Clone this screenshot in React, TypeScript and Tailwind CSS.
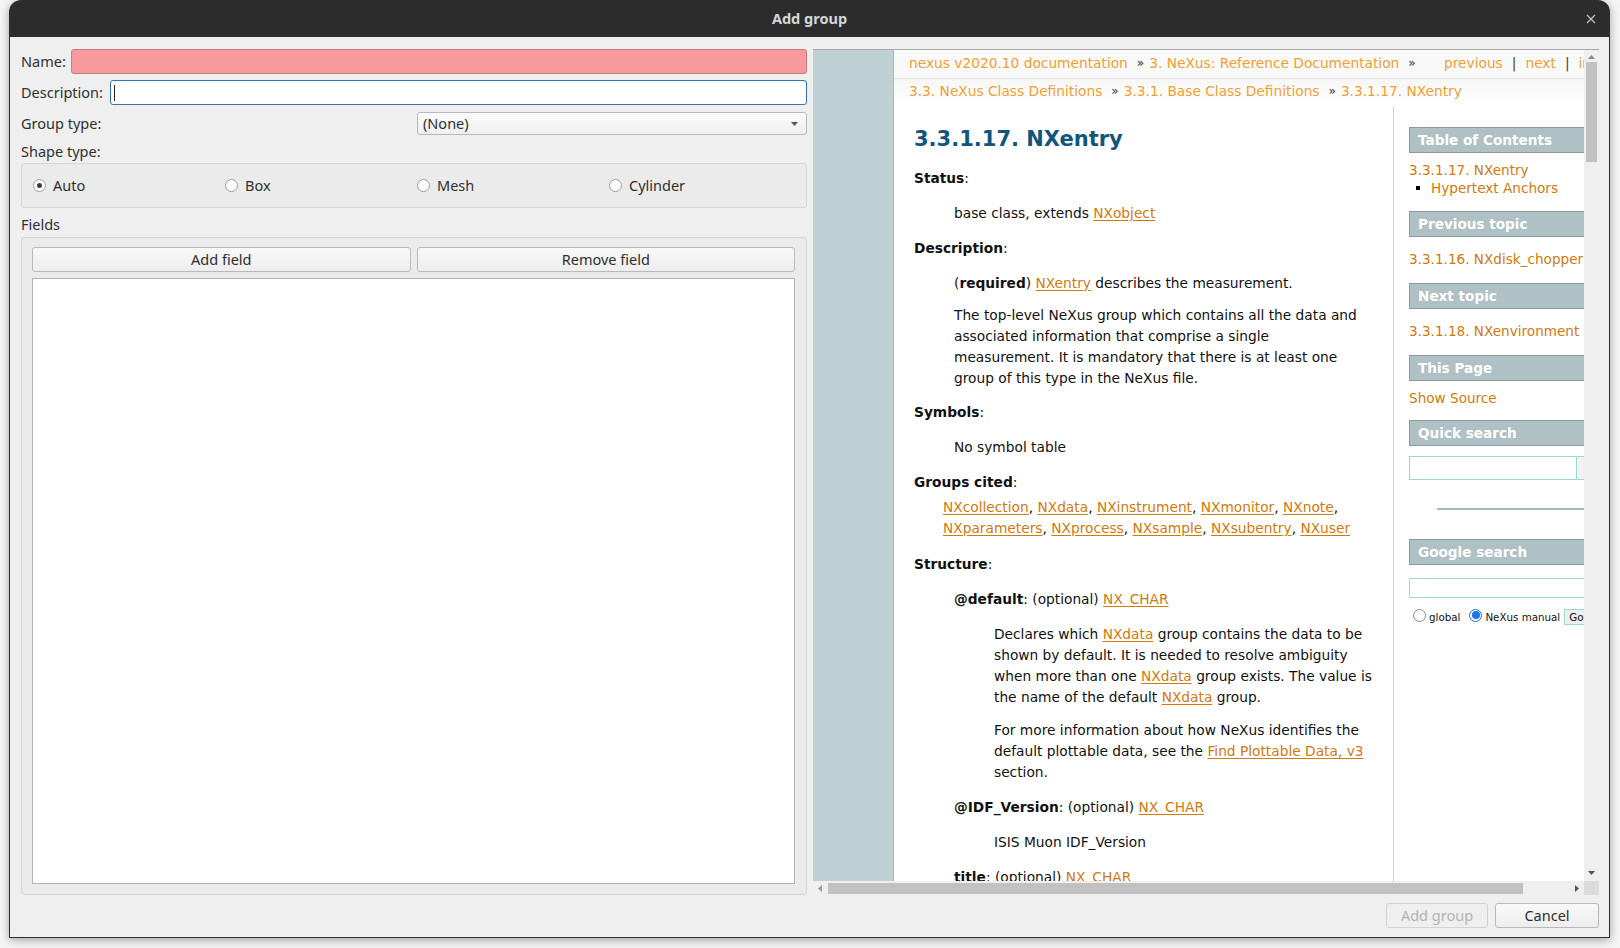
import React from 'react';

const A = ({ children }: { children: React.ReactNode }) => (
  <span className="text-[#cf7a0c] underline underline-offset-[2px]">{children}</span>
);

const Radio = ({ checked, label }: { checked?: boolean; label: string }) => (
  <div className="flex items-center gap-[7px]">
    <span className="flex h-[13px] w-[13px] items-center justify-center rounded-full border border-[#9c9c9c] bg-white">
      {checked && <span className="h-[5px] w-[5px] rounded-full bg-[#3c3c3c]" />}
    </span>
    <span>{label}</span>
  </div>
);

const QtButton = ({ children, disabled, className = '' }: { children: React.ReactNode; disabled?: boolean; className?: string }) => (
  <div
    className={`flex h-[25px] items-center justify-center rounded-[3px] border ${
      disabled
        ? 'border-[#d2d2d2] bg-[#efefef] text-[#b3b3b3]'
        : 'border-[#b9b9b9] bg-gradient-to-b from-[#f9f9f9] to-[#ededed] text-[#2e2e2e]'
    } ${className}`}
  >
    {children}
  </div>
);

const SideHead = ({ children, className = '' }: { children: React.ReactNode; className?: string }) => (
  <div className={`flex h-[26px] items-center border border-[#889b9f] bg-[#afc1c4] pl-[8px] font-bold text-white ${className}`}>
    {children}
  </div>
);

const Sep = () => <span className="ml-[9px] mr-[5px] text-[12px] text-[#333]">»</span>;

export default function App() {
  return (
    <div className="h-[948px] w-[1620px] overflow-hidden bg-[#f5f5f5] pl-[9px] font-['Noto_Sans','Open_Sans',sans-serif] text-[14.5px] text-[#2f2f2f]">
      <div className="flex h-[938px] w-[1601px] flex-col rounded-t-[12px] shadow-[0_2px_10px_rgba(0,0,0,0.35)]">
        {/* Title bar */}
        <div className="relative flex h-[37px] items-center justify-center rounded-t-[12px] bg-[#2c2c2c]">
          <span className="font-bold text-[#d6d6d6]">Add group</span>
          <svg className="absolute right-[14px] top-[14px]" width="10" height="10" viewBox="0 0 10 10">
            <path d="M1 1 L9 9 M9 1 L1 9" stroke="#c4c4c4" strokeWidth="1.2" />
          </svg>
        </div>

        {/* Body */}
        <div className="flex flex-1 flex-col border-x border-b border-[#2d2d2d] bg-[#efefef] pb-[9px] pl-[11px] pr-[10px] pt-[12px]">
          <div className="flex h-[846px] gap-[6px]">
            {/* Left pane */}
            <div className="flex w-[786px] flex-col">
              <div className="flex h-[25px] items-center">
                <span className="w-[50px]">Name:</span>
                <div className="h-[25px] flex-1 rounded-[3px] border border-[#c97a7e] bg-[#f7999d]" />
              </div>
              <div className="mt-[6px] flex h-[25px] items-center">
                <span className="w-[89px]">Description:</span>
                <div className="flex h-[25px] flex-1 items-center rounded-[3px] border border-[#2f74b5] bg-white pl-[3px]">
                  <span className="h-[16px] w-[1px] bg-[#222]" />
                </div>
              </div>
              <div className="mt-[7px] flex h-[23px] items-center">
                <span className="w-[396px]">Group type:</span>
                <div className="flex h-[23px] flex-1 items-center justify-between rounded-[3px] border border-[#b8b8b8] bg-gradient-to-b from-[#fbfbfb] to-[#efefef] pl-[5px] pr-[8px]">
                  <span>(None)</span>
                  <svg width="7" height="4" viewBox="0 0 7 4">
                    <path d="M0 0 L7 0 L3.5 4 Z" fill="#555" />
                  </svg>
                </div>
              </div>
              <div className="mt-[8px] flex h-[18px] items-center">Shape type:</div>
              <div className="mt-[2px] grid h-[45px] grid-cols-[192px_192px_192px_192px] items-center rounded-[3px] border border-[#d6d6d6] bg-[#ebebeb] pl-[11px]">
                <Radio checked label="Auto" />
                <Radio label="Box" />
                <Radio label="Mesh" />
                <Radio label="Cylinder" />
              </div>
              <div className="mt-[8px] flex h-[18px] items-center">Fields</div>
              <div className="mt-[3px] flex flex-1 flex-col rounded-[3px] border border-[#d6d6d6] bg-[#ebebeb] pb-[10px] pl-[10px] pr-[11px] pt-[9px]">
                <div className="flex gap-[6px]">
                  <QtButton className="flex-1">Add field</QtButton>
                  <QtButton className="flex-1">Remove field</QtButton>
                </div>
                <div className="mt-[6px] flex-1 border border-[#b4b4b4] bg-white" />
              </div>
            </div>

            {/* Right pane: documentation view */}
            <div className="flex w-[786px] flex-col border-t border-[#a9a9a9] font-['DejaVu_Sans',Verdana,sans-serif] text-[13.75px] text-[#111]">
              <div className="flex h-[831px]">
                <div className="flex w-[771px] overflow-hidden">
                  <div className="w-[80px] flex-none bg-[#bfd1d5]" />
                  <div className="w-[760px] flex-none border-l border-[#a7b7ba] bg-white">
                    {/* related bars */}
                    <div className="flex h-[29px] items-start border-b border-[#e2e2e2] bg-[#f9f9f9] pl-[15px] pt-[5px] leading-[17px] text-[#f09f33]">
                      <div className="flex w-[535px] flex-none items-center whitespace-nowrap">
                        <span>nexus v2020.10 documentation</span>
                        <Sep />
                        <span>3. NeXus: Reference Documentation</span>
                        <Sep />
                      </div>
                      <div className="flex items-center whitespace-nowrap">
                        <span>previous</span>
                        <span className="mx-[9px] text-[#444]">|</span>
                        <span>next</span>
                        <span className="mx-[9px] text-[#444]">|</span>
                        <span>index</span>
                      </div>
                    </div>
                    <div className="flex h-[28px] items-start whitespace-nowrap bg-gradient-to-b from-[#f7f7f7] to-white pl-[15px] pt-[4px] leading-[17px] text-[#f09f33]">
                      <span>3.3. NeXus Class Definitions</span>
                      <Sep />
                      <span>3.3.1. Base Class Definitions</span>
                      <Sep />
                      <span>3.3.1.17. NXentry</span>
                    </div>

                    <div className="flex">
                      {/* main body */}
                      <div className="w-[499px] flex-none whitespace-nowrap pl-[20px] leading-[21px]">
                        <div className="mt-[17px] h-[30px] text-[21px] font-bold leading-[30px] text-[#11557c]">3.3.1.17. NXentry</div>
                        <div className="mt-[14px]"><b>Status</b>:</div>
                        <div className="ml-[40px] mt-[14px]">base class, extends <A>NXobject</A></div>
                        <div className="mt-[14px]"><b>Description</b>:</div>
                        <div className="ml-[40px] mt-[14px]">(<b>required</b>) <A>NXentry</A> describes the measurement.</div>
                        <div className="ml-[40px] mt-[11px]">
                          <div>The top-level NeXus group which contains all the data and</div>
                          <div>associated information that comprise a single</div>
                          <div>measurement. It is mandatory that there is at least one</div>
                          <div>group of this type in the NeXus file.</div>
                        </div>
                        <div className="mt-[13px]"><b>Symbols</b>:</div>
                        <div className="ml-[40px] mt-[14px]">No symbol table</div>
                        <div className="mt-[14px]"><b>Groups cited</b>:</div>
                        <div className="ml-[29px] mt-[4px]">
                          <div>
                            <A>NXcollection</A>, <A>NXdata</A>, <A>NXinstrument</A>, <A>NXmonitor</A>, <A>NXnote</A>,
                          </div>
                          <div>
                            <A>NXparameters</A>, <A>NXprocess</A>, <A>NXsample</A>, <A>NXsubentry</A>, <A>NXuser</A>
                          </div>
                        </div>
                        <div className="mt-[15px]"><b>Structure</b>:</div>
                        <div className="ml-[40px] mt-[14px]"><b>@default</b>: (optional) <A>NX_CHAR</A></div>
                        <div className="ml-[80px] mt-[14px]">
                          <div>Declares which <A>NXdata</A> group contains the data to be</div>
                          <div>shown by default. It is needed to resolve ambiguity</div>
                          <div>when more than one <A>NXdata</A> group exists. The value is</div>
                          <div>the name of the default <A>NXdata</A> group.</div>
                        </div>
                        <div className="ml-[80px] mt-[12px]">
                          <div>For more information about how NeXus identifies the</div>
                          <div>default plottable data, see the <A>Find Plottable Data, v3</A></div>
                          <div>section.</div>
                        </div>
                        <div className="ml-[40px] mt-[14px]"><b>@IDF_Version</b>: (optional) <A>NX_CHAR</A></div>
                        <div className="ml-[80px] mt-[14px]">ISIS Muon IDF_Version</div>
                        <div className="ml-[40px] mt-[14px]"><b>title</b>: (optional) <A>NX_CHAR</A></div>
                      </div>

                      {/* sidebar */}
                      <div className="h-[780px] w-[260px] flex-none whitespace-nowrap border-l border-[#cfcfcf] pl-[15px] text-[13.6px] leading-[18px]">
                        <SideHead className="mt-[20px]">Table of Contents</SideHead>
                        <div className="mt-[8px] text-[#cf7a0c]">3.3.1.17. NXentry</div>
                        <div className="flex items-center text-[#cf7a0c]">
                          <span className="ml-[7px] mr-[11px] h-[4px] w-[4px] bg-black" />
                          Hypertext Anchors
                        </div>
                        <SideHead className="mt-[14px]">Previous topic</SideHead>
                        <div className="mt-[13px] text-[#cf7a0c]">3.3.1.16. NXdisk_chopper</div>
                        <SideHead className="mt-[15px]">Next topic</SideHead>
                        <div className="mt-[13px] text-[#cf7a0c]">3.3.1.18. NXenvironment</div>
                        <SideHead className="mt-[15px]">This Page</SideHead>
                        <div className="mt-[8px] text-[#cf7a0c]">Show Source</div>
                        <SideHead className="mt-[13px]">Quick search</SideHead>
                        <div className="mt-[10px] flex h-[24px]">
                          <div className="w-[168px] border border-[#98dbcc] bg-white" />
                          <div className="w-[40px] border border-l-0 border-[#98dbcc] bg-[#f2f2f2]" />
                        </div>
                        <div className="ml-[28px] mt-[28px] h-[2px] bg-[#a9b8c3]" />
                        <SideHead className="mt-[29px]">Google search</SideHead>
                        <div className="mt-[13px] h-[20px] border border-[#98dbcc] bg-white" />
                        <div className="mt-[9px] flex h-[16px] items-center text-[10.3px] text-[#111]">
                          <span className="ml-[4px] h-[13px] w-[13px] rounded-full border border-[#8a8a8a] bg-white" />
                          <span className="ml-[3px] mt-[3px]">global</span>
                          <span className="ml-[9px] flex h-[13px] w-[13px] items-center justify-center rounded-full border border-[#1a73e8] bg-white">
                            <span className="h-[8px] w-[8px] rounded-full bg-[#1a73e8]" />
                          </span>
                          <span className="ml-[3px] mt-[3px]">NeXus manual</span>
                          <span className="ml-[4px] mt-[3px] flex h-[16px] items-center border border-[#98dbcc] bg-[#eeeeee] px-[4px]">Go</span>
                        </div>
                      </div>
                    </div>
                  </div>
                </div>
                {/* vertical scrollbar */}
                <div className="flex w-[15px] flex-col items-center bg-[#efefef]">
                  <svg className="mt-[5px]" width="7" height="4" viewBox="0 0 7 4">
                    <path d="M0 4 L7 4 L3.5 0 Z" fill="#8a8a8a" />
                  </svg>
                  <div className="mt-[3px] h-[100px] w-[11px] bg-[#c1c1c1]" />
                  <div className="flex-1" />
                  <svg className="mb-[6px]" width="7" height="4" viewBox="0 0 7 4">
                    <path d="M0 0 L7 0 L3.5 4 Z" fill="#555" />
                  </svg>
                </div>
              </div>
              {/* horizontal scrollbar */}
              <div className="flex h-[14px]">
                <div className="flex w-[771px] items-center bg-[#efefef]">
                  <svg className="ml-[5px]" width="4" height="7" viewBox="0 0 4 7">
                    <path d="M4 0 L4 7 L0 3.5 Z" fill="#9a9a9a" />
                  </svg>
                  <div className="ml-[6px] h-[11px] w-[695px] bg-[#c1c1c1]" />
                  <div className="flex-1" />
                  <svg className="mr-[5px]" width="4" height="7" viewBox="0 0 4 7">
                    <path d="M0 0 L0 7 L4 3.5 Z" fill="#555" />
                  </svg>
                </div>
                <div className="w-[15px] bg-[#dcdcdc]" />
              </div>
            </div>
          </div>

          {/* dialog buttons */}
          <div className="mt-[8px] flex justify-end gap-[7px]">
            <QtButton disabled className="w-[102px]">Add group</QtButton>
            <QtButton className="w-[104px]">Cancel</QtButton>
          </div>
        </div>
      </div>
    </div>
  );
}
